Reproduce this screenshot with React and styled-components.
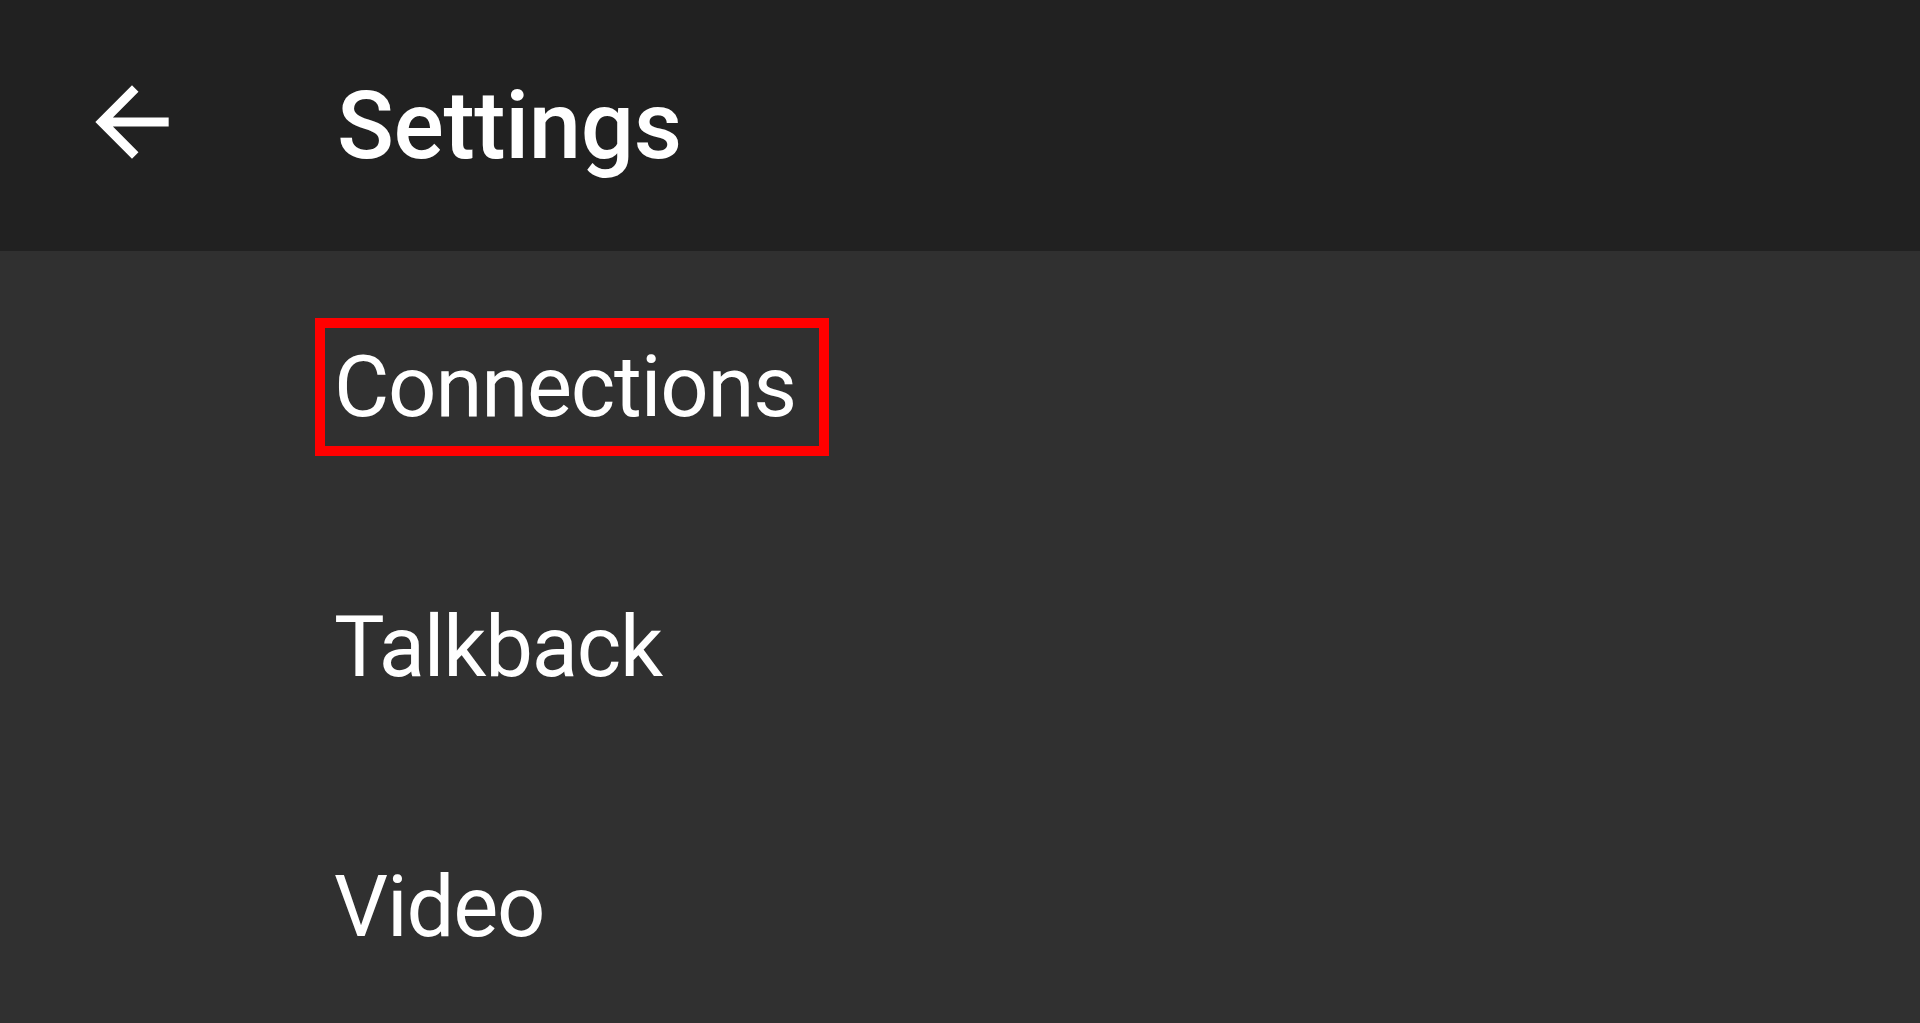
import React from 'react';
import styled, { createGlobalStyle } from 'styled-components';
import { MdArrowBack } from 'react-icons/md';

const GlobalStyle = createGlobalStyle`
  html, body {
    margin: 0;
    padding: 0;
    background: #303030;
    overflow: hidden;
  }
  body {
    font-family: Roboto, "Liberation Sans", sans-serif;
  }
`;

const Screen = styled.div`
  width: 1920px;
  height: 1023px;
  background: #303030;
  color: #fff;
  overflow: hidden;
`;

const Toolbar = styled.header`
  height: 251px;
  background: #212121;
  display: flex;
  align-items: center;
  padding-left: 77px;
  box-sizing: border-box;
`;

const BackButton = styled.button`
  width: 110px;
  height: 110px;
  padding: 0;
  border: none;
  background: transparent;
  color: #fff;
  display: flex;
  margin-top: -8px;
  cursor: pointer;

  svg {
    width: 110px;
    height: 110px;
  }
`;

const Title = styled.h1`
  margin: 0 0 0 150px;
  font-size: 94px;
  font-weight: 500;
  line-height: normal;
  letter-spacing: -0.4px;
`;

const List = styled.ul`
  list-style: none;
  margin: 0;
  padding: 6px 0 0;
`;

const Row = styled.li`
  height: 260px;
  display: flex;
  align-items: center;
  padding-left: 334px;
`;

const Label = styled.span`
  display: inline-block;
  font-size: 85px;
  font-weight: 400;
  line-height: 100px;
  letter-spacing: -1.2px;
  ${({ $highlighted }) =>
    $highlighted &&
    `
    padding-right: 14px;
    outline: 10px solid #ff0000;
    outline-offset: 9px;
  `}
`;

const items = ['Connections', 'Talkback', 'Video'];

export default function App() {
  return (
    <Screen>
      <GlobalStyle />
      <Toolbar>
        <BackButton aria-label="Back">
          <MdArrowBack />
        </BackButton>
        <Title>Settings</Title>
      </Toolbar>
      <List>
        {items.map((item, i) => (
          <Row key={item}>
            <Label $highlighted={i === 0}>{item}</Label>
          </Row>
        ))}
      </List>
    </Screen>
  );
}
